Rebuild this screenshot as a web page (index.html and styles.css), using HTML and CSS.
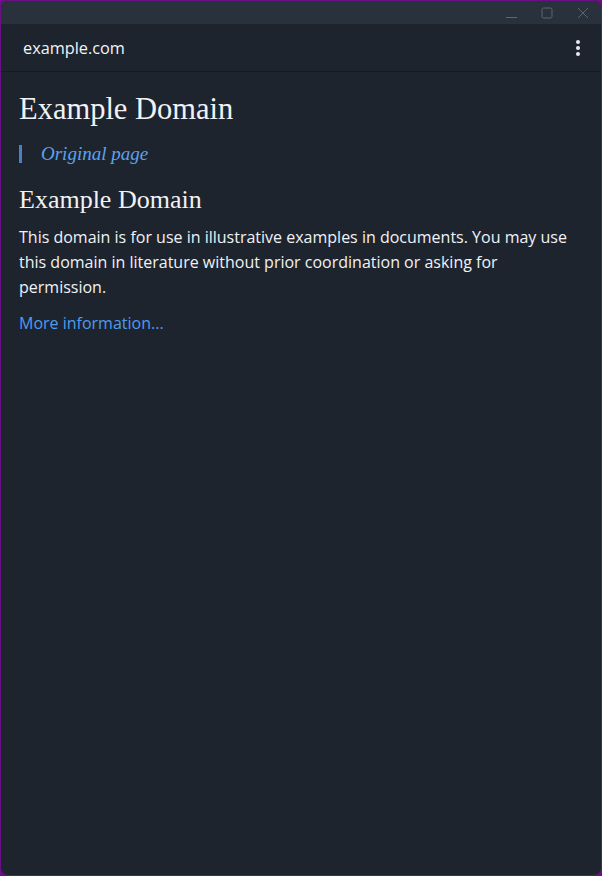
FILE: index.html
```html
<!DOCTYPE html>
<html lang="en">
<head>
    <meta charset="UTF-8">
    <meta name="viewport" content="width=device-width, initial-scale=1.0">
    <title>example.com</title>
    <link rel="stylesheet" href="styles.css">
</head>
<body>
    <div class="window">
        <div class="titlebar">
            <span class="ctl ctl-min"></span>
            <span class="ctl">
                <svg width="12" height="12" viewBox="0 0 12 12"><rect x="1" y="1" width="10" height="10" rx="1.5" fill="none" stroke="currentColor" stroke-width="1"/></svg>
            </span>
            <span class="ctl">
                <svg width="12" height="12" viewBox="0 0 12 12"><path d="M1 1 L11 11 M11 1 L1 11" stroke="currentColor" stroke-width="1"/></svg>
            </span>
        </div>

        <header class="topbar">
            <span class="host">example.com</span>
            <span class="kebab"><i></i><i></i><i></i></span>
        </header>

        <main class="page">
            <h1>Example Domain</h1>
            <blockquote class="source"><em>Original page</em></blockquote>
            <h2>Example Domain</h2>
            <p>This domain is for use in illustrative examples in documents. You may use this domain in literature without prior coordination or asking for permission.</p>
            <p class="more"><a href="#">More information...</a></p>
        </main>
    </div>
</body>
</html>
```

FILE: styles.css
```css
html, body {
    margin: 0;
    height: 100%;
    background: #6b0f86;
}
body {
    font-family: "Open Sans", "Noto Sans", sans-serif;
}
.window {
    height: 100%;
    box-sizing: border-box;
    border: 1px solid #6b0f86;
    border-radius: 8px;
    background: #1e242e;
    overflow: hidden;
    display: flex;
    flex-direction: column;
}
.titlebar {
    height: 23px;
    background: #29313c;
    display: flex;
    justify-content: flex-end;
    align-items: center;
}
.ctl {
    width: 36px;
    height: 23px;
    display: flex;
    align-items: center;
    justify-content: center;
    color: #5d6772;
}
.ctl-min::before {
    content: "";
    width: 11px;
    height: 1px;
    margin-top: 9px;
    background: #5d6772;
}
.topbar {
    height: 47px;
    border-bottom: 1px solid #161b22;
    display: flex;
    align-items: center;
    justify-content: space-between;
    padding: 0 21px 0 22px;
}
.host {
    color: #f2f4f7;
    font-size: 16.3px;
}
.kebab {
    display: flex;
    flex-direction: column;
    gap: 2px;
}
.kebab i {
    width: 4px;
    height: 4px;
    border-radius: 50%;
    background: #e8eaed;
}
.page {
    padding: 0 18px;
    color: #f0f2f5;
}
h1 {
    font-family: "Liberation Serif", "DejaVu Serif", serif;
    font-weight: normal;
    font-size: 30.5px;
    margin: 20px 0 0;
}
.source {
    margin: 18px 0 0;
    padding-left: 19px;
    border-left: 3px solid #4b80c4;
    font-family: "Liberation Serif", "DejaVu Serif", serif;
    font-size: 19px;
    color: #5ba2ec;
    line-height: 18px;
}
h2 {
    font-family: "Liberation Serif", "DejaVu Serif", serif;
    font-weight: normal;
    font-size: 26px;
    margin: 22px 0 0;
}
p {
    font-size: 16px;
    line-height: 25px;
    margin: 10px 0 0;
}
.more {
    margin-top: 11px;
}
a {
    color: #4d9cf0;
    text-decoration: none;
}
```
